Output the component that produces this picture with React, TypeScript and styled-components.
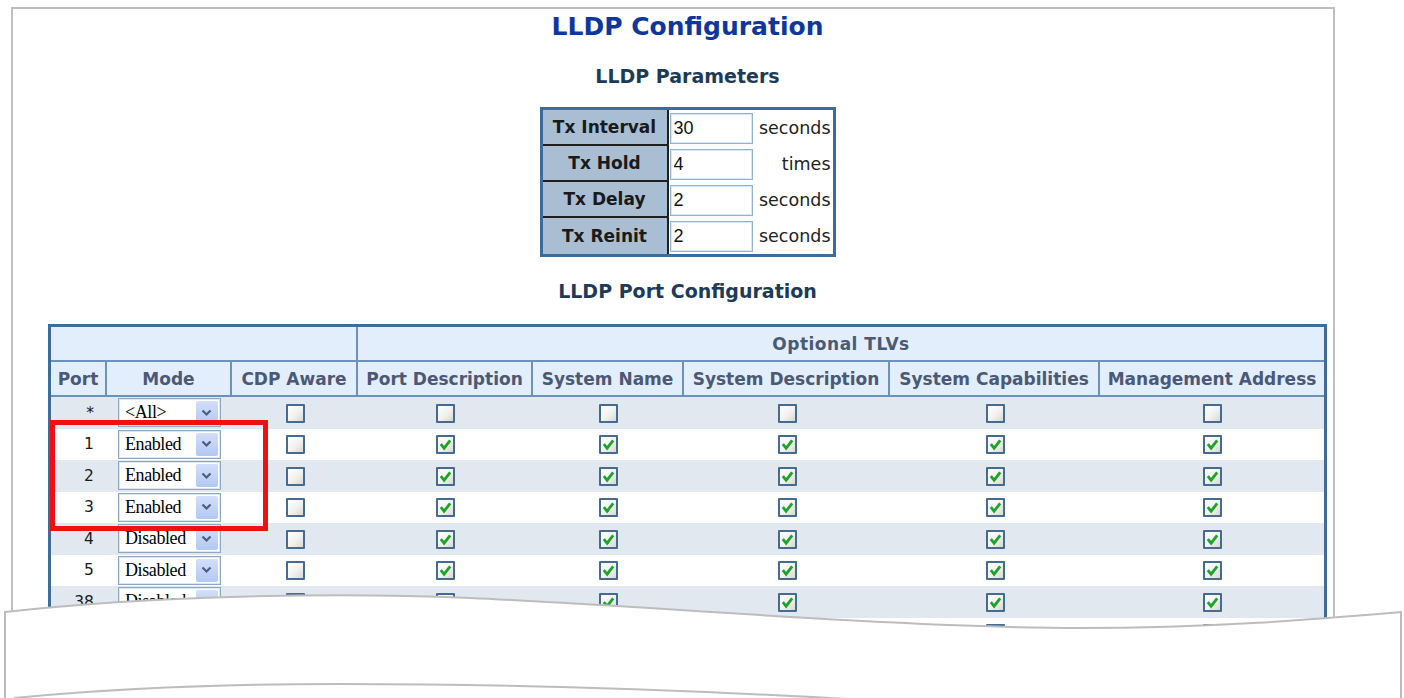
import React from 'react';
import styled, { createGlobalStyle } from 'styled-components';

const GlobalStyle = createGlobalStyle`
  html, body {
    margin: 0;
    padding: 0;
    background: #ffffff;
  }
  body {
    font-family: "DejaVu Sans", Verdana, sans-serif;
  }
`;

const Page = styled.div`
  position: relative;
  width: 1404px;
  height: 698px;
  overflow: hidden;
  box-sizing: border-box;
  padding: 7px 0 0 11px;
  background: #ffffff;
`;

const Frame = styled.div`
  width: 1324px;
  min-height: 760px;
  box-sizing: border-box;
  border: 2px solid #bfbfbf;
  border-bottom: none;
  padding: 3px 6px 0 35px;
  display: flex;
  flex-direction: column;
  align-items: center;
`;

const Title = styled.h1`
  margin: 0;
  font: bold 25px/30px "DejaVu Sans", Verdana, sans-serif;
  color: #0d379c;
`;

const SubTitle = styled.h2`
  margin: 22px 0 0;
  font: bold 19px/24px "DejaVu Sans", Verdana, sans-serif;
  color: #1d3a57;
`;

const ParamTable = styled.table`
  margin-top: 19px;
  border: 3px solid #3a6c9d;
  border-collapse: separate;
  border-spacing: 0;

  tbody tr:not(:last-child) > th {
    height: 34px;
    border-bottom: 2px solid #1f1f1f;
  }
  tbody tr:last-child > th {
    height: 36px;
  }
`;

const ParamLabel = styled.th`
  width: 124px;
  padding: 0;
  background: #a9bed2;
  border-right: 2px solid #1f1f1f;
  font: bold 17px "DejaVu Sans", Verdana, sans-serif;
  color: #1a1a1a;
  text-align: center;
  white-space: nowrap;
`;

const ParamCell = styled.td`
  width: 161px;
  padding: 0 2px 0 1px;
  background: #ffffff;
`;

const ValueWrap = styled.div`
  display: flex;
  align-items: center;
  justify-content: space-between;
`;

const ValueInput = styled.input`
  width: 83px;
  height: 31px;
  box-sizing: border-box;
  margin: 0;
  padding: 0 3px;
  border: 1px solid #93b3d3;
  box-shadow: inset 0 0 0 1px #dbe7f3;
  font: 18px "Liberation Sans", Arial, sans-serif;
  color: #111;
  background: #fff;
  outline: none;
`;

const Unit = styled.span`
  font: 17.5px "DejaVu Sans", Verdana, sans-serif;
  color: #222;
`;

const TableWrap = styled.div`
  position: relative;
  margin-top: 21px;
`;

const PortTable = styled.table`
  width: 1279px;
  table-layout: fixed;
  border: 3px solid #3e6c9b;
  border-collapse: separate;
  border-spacing: 0;
`;

const HeadCell = styled.th<{ $spacing?: string }>`
  height: 33px;
  padding: 0;
  background: #e2eefc;
  border-right: 2px solid #6a92bb;
  border-bottom: 2px solid #6a92bb;
  font: bold 17px "DejaVu Sans", Verdana, sans-serif;
  letter-spacing: ${(p) => p.$spacing || '0'};
  color: #4b5876;
  text-align: center;
  white-space: nowrap;

  &:last-child {
    border-right: none;
  }
`;

const Row = styled.tr<{ $shade: boolean }>`
  background: ${(p) => (p.$shade ? '#e1e8f0' : '#ffffff')};
`;

const Cell = styled.td`
  height: 31.5px;
  padding: 0;
  text-align: center;
  vertical-align: middle;
`;

const PortCell = styled(Cell)`
  text-align: right;
  padding-right: 13px;
  font: 15.5px "DejaVu Sans", Verdana, sans-serif;
  color: #1a1a1a;
`;

const SelectBox = styled.div`
  display: inline-flex;
  align-items: center;
  justify-content: space-between;
  vertical-align: middle;
  width: 103px;
  height: 29px;
  box-sizing: border-box;
  padding: 0 2px 0 6px;
  border: 1px solid #8ea8c3;
  box-shadow: inset 0 0 0 1px #dde7f1;
  background: #ffffff;
  font: 18px "Liberation Serif", "Times New Roman", serif;
  letter-spacing: -0.4px;
  color: #000;
  text-align: left;
`;

const ArrowButton = styled.span`
  display: flex;
  align-items: center;
  justify-content: center;
  width: 22px;
  height: 23px;
  border-radius: 2px;
  background: linear-gradient(#d3dffa, #b2c8f3);
`;

const Box = styled.span`
  display: inline-flex;
  align-items: center;
  justify-content: center;
  vertical-align: middle;
  width: 19px;
  height: 19px;
  box-sizing: border-box;
  border: 2px solid #456b93;
  border-radius: 1px;
  background: linear-gradient(135deg, #ffffff 0%, #f1f1ed 55%, #d9d9d3 100%);
`;

const Highlight = styled.div`
  position: absolute;
  left: 2px;
  top: 96px;
  width: 218px;
  height: 111px;
  box-sizing: border-box;
  border: 5px solid #ee1111;
  pointer-events: none;
`;

const Tear = styled.svg`
  position: absolute;
  left: 0;
  top: 590px;
`;

type PortRow = { port: string; mode: string; cdp: boolean; tlv: boolean };

const ports: PortRow[] = [
  { port: '*', mode: '<All>', cdp: false, tlv: false },
  { port: '1', mode: 'Enabled', cdp: false, tlv: true },
  { port: '2', mode: 'Enabled', cdp: false, tlv: true },
  { port: '3', mode: 'Enabled', cdp: false, tlv: true },
  { port: '4', mode: 'Disabled', cdp: false, tlv: true },
  { port: '5', mode: 'Disabled', cdp: false, tlv: true },
  { port: '38', mode: 'Disabled', cdp: false, tlv: true },
  { port: '39', mode: 'Disabled', cdp: false, tlv: true },
];

const params = [
  { label: 'Tx Interval', value: '30', unit: 'seconds' },
  { label: 'Tx Hold', value: '4', unit: 'times' },
  { label: 'Tx Delay', value: '2', unit: 'seconds' },
  { label: 'Tx Reinit', value: '2', unit: 'seconds' },
];

const tlvHeaders = [
  'Port Description',
  'System Name',
  'System Description',
  'System Capabilities',
  'Management Address',
];

const colWidths = [56, 125, 126, 175, 151, 206, 210, 224];

function CheckBox({ checked }: { checked: boolean }) {
  return (
    <Box>
      {checked && (
        <svg width="15" height="15" viewBox="0 0 15 15">
          <path d="M2.8 7.2 L6.1 11.2 L12.2 3.3" fill="none" stroke="#20a32d" strokeWidth="2.8" />
        </svg>
      )}
    </Box>
  );
}

function ModeSelect({ value }: { value: string }) {
  return (
    <SelectBox>
      <span>{value}</span>
      <ArrowButton>
        <svg width="11" height="8" viewBox="0 0 11 8">
          <path d="M1.5 1.5 L5.5 5.5 L9.5 1.5" fill="none" stroke="#4b5f82" strokeWidth="2.2" />
        </svg>
      </ArrowButton>
    </SelectBox>
  );
}

export default function App() {
  return (
    <Page>
      <GlobalStyle />
      <Frame>
        <Title>LLDP Configuration</Title>
        <SubTitle>LLDP Parameters</SubTitle>
        <ParamTable>
          <tbody>
            {params.map((p) => (
              <tr key={p.label}>
                <ParamLabel>{p.label}</ParamLabel>
                <ParamCell>
                  <ValueWrap>
                    <ValueInput value={p.value} readOnly />
                    <Unit>{p.unit}</Unit>
                  </ValueWrap>
                </ParamCell>
              </tr>
            ))}
          </tbody>
        </ParamTable>

        <SubTitle>LLDP Port Configuration</SubTitle>
        <TableWrap>
          <PortTable>
            <colgroup>
              {colWidths.map((w, i) => (
                <col key={i} style={{ width: w }} />
              ))}
            </colgroup>
            <thead>
              <tr>
                <HeadCell colSpan={3}></HeadCell>
                <HeadCell colSpan={5} $spacing="0.5px">Optional TLVs</HeadCell>
              </tr>
              <tr>
                <HeadCell>Port</HeadCell>
                <HeadCell>Mode</HeadCell>
                <HeadCell>CDP Aware</HeadCell>
                {tlvHeaders.map((h) => (
                  <HeadCell key={h}>{h}</HeadCell>
                ))}
              </tr>
            </thead>
            <tbody>
              {ports.map((r, i) => (
                <Row key={r.port} $shade={i % 2 === 0}>
                  <PortCell>{r.port}</PortCell>
                  <Cell>
                    <ModeSelect value={r.mode} />
                  </Cell>
                  <Cell>
                    <CheckBox checked={r.cdp} />
                  </Cell>
                  {tlvHeaders.map((h) => (
                    <Cell key={h}>
                      <CheckBox checked={r.tlv} />
                    </Cell>
                  ))}
                </Row>
              ))}
            </tbody>
          </PortTable>
          <Highlight />
        </TableWrap>
      </Frame>

      <Tear width="1404" height="110" viewBox="0 590 1404 110">
        <path
          d="M5,700 L5,612 C150,596 330,592 470,598 C650,606 900,628 1080,628 C1220,628 1330,618 1401,612 L1401,700 Z"
          fill="#ffffff"
        />
        <path
          d="M5,700 L5,612 C150,596 330,592 470,598 C650,606 900,628 1080,628 C1220,628 1330,618 1401,612 L1401,700"
          fill="none"
          stroke="#bdbdbd"
          strokeWidth="2"
        />
        <path
          d="M14,698 C120,688 230,684 340,684 C520,684 700,690 900,702"
          fill="none"
          stroke="#bdbdbd"
          strokeWidth="2"
        />
      </Tear>
    </Page>
  );
}
